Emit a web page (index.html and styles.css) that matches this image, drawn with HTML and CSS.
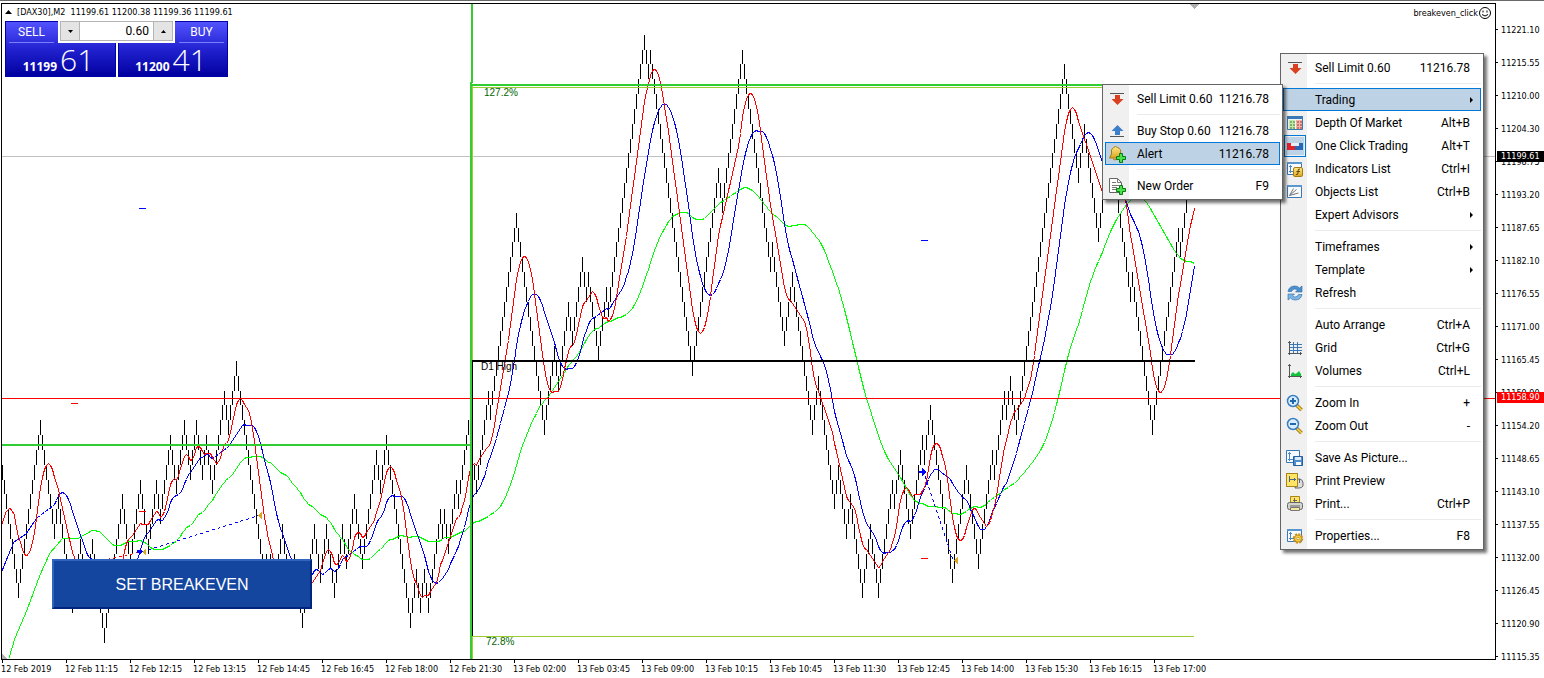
FILE: index.html
```html
<!DOCTYPE html>
<html lang="en">
<head>
<meta charset="utf-8">
<title>[DAX30],M2</title>
<link rel="stylesheet" href="styles.css">
</head>
<body>
<svg class="sprite" aria-hidden="true">
  <defs>
    <linearGradient id="gold" x1="0" y1="0" x2="0" y2="1"><stop offset="0" stop-color="#ffe98a"/><stop offset="1" stop-color="#dda41c"/></linearGradient>
    <symbol id="i-sell" viewBox="0 0 18 18"><path d="M2 3.500h14" stroke="#555"/><path d="M7 5h5v4h3.500l-6 6-6-6H7z" fill="#d9401f"/></symbol>
    <symbol id="i-buy" viewBox="0 0 18 18"><path d="M2 14.500h14" stroke="#555"/><path d="M7 13h5V9h3.500l-6-6-6 6H7z" fill="#3b7fc8"/></symbol>
    <symbol id="i-plus" viewBox="0 0 18 18"><path d="M11.500 8.500h3v3h3v3h-3v3h-3v-3h-3v-3h3z" fill="#4ce04c" stroke="#087a12"/></symbol>
    <symbol id="i-alert" viewBox="0 0 18 18"><path d="M5.500 2.500q2-2 4 0q4 1 3 6l2 4.500h-13l2-4q-1-5 2-6.500z" fill="url(#gold)" stroke="#a87b12"/><path d="M5 14q2 2 4 0" stroke="#a87b12" fill="none"/><use href="#i-plus"/></symbol>
    <symbol id="i-order" viewBox="0 0 18 18"><path d="M1.500 1.500h8l4 4v10h-12z" fill="#fff" stroke="#666"/><path d="M9.500 1.500v4h4M4 5.500h4M4 8.500h7M4 10.500h5M4 12.500h4" fill="none" stroke="#777"/><use href="#i-plus"/></symbol>
    <symbol id="i-depth" viewBox="0 0 18 18"><path d="M1.500 2.500h15v13h-15z" fill="#eef4fa" stroke="#3b79b5"/><path d="M1 2h16v3H1z" fill="#3b79b5"/><path d="M3 6h6v9H3z" fill="#c4e8a8"/><path d="M10 6h6v9h-6z" fill="#f0b4a8"/><path d="M4 8h2m1 0h2m-5 3h2m1 0h2m-5 3h2m1 0h2" stroke="#3e7d22"/><path d="M11 8h2m1 0h2m-5 3h2m1 0h2m-5 3h2m1 0h2" stroke="#a33"/></symbol>
    <symbol id="i-click" viewBox="0 0 18 18"><path d="M1 6h4v3h4v4H1z" fill="#e0242b"/><path d="M17 6h-4v3H9v4h8z" fill="#2767b4"/><path d="M5 6h8v3H5z" fill="#e8eef4"/></symbol>
    <symbol id="i-chart" viewBox="0 0 18 18"><path d="M1.500 2.500h14v12h-14z" fill="#f7fbff" stroke="#3b79b5"/><path d="M1 2h15v2H1z" fill="#5b97cf"/><path d="M4.500 5v8M3 6.500h3M3 11.500h9" stroke="#4f86bd" fill="none"/></symbol>
    <symbol id="i-indicators" viewBox="0 0 18 18"><use href="#i-chart"/><rect x="7.500" y="7.500" width="9" height="9" rx="1.500" fill="url(#gold)" stroke="#a87b12"/><path d="M14 9q-2-.5-2 2v2q0 2-2 1.500M10.500 11.500h3.500" fill="none" stroke="#5c430b"/></symbol>
    <symbol id="i-objects" viewBox="0 0 18 18"><path d="M1.500 2.500h14v12h-14z" fill="#f7fbff" stroke="#3b79b5"/><path d="M1 2h15v2H1z" fill="#5b97cf"/><path d="M3.500 12.500l4-7M3.500 12.500l7-6M3.500 12.500l9-2.500" stroke="#777" fill="none"/></symbol>
    <symbol id="i-refresh" viewBox="0 0 18 18"><path d="M2 7.500q1-5.500 7-5.500q3 0 4.500 2L16 2v6H9.500l2-2q-4-2.500-6 1.500z" fill="#4b90cf" stroke="#2b67a3" stroke-width=".6"/><path d="M16 10.500q-1 5.500-7 5.500q-3 0-4.500-2L2 16v-6h6.500l-2 2q4 2.500 6-1.500z" fill="#7db6e4" stroke="#2b67a3" stroke-width=".6"/></symbol>
    <symbol id="i-grid" viewBox="0 0 18 18"><path d="M3.500 2v14M2 3.500h3M2 14.500h14M14.500 13v3" stroke="#555" fill="none"/><path d="M7.500 3v11M11.500 3v11M4 5.500h12M4 8.500h12M4 11.500h12" stroke="#3b79b5" fill="none"/></symbol>
    <symbol id="i-volumes" viewBox="0 0 18 18"><path d="M3.500 2v14M2 3.500h3M2 14.500h14M14.500 13v3" stroke="#555" fill="none"/><path d="M5 14v-2l2-2 2 2 2-1 2-2 2 3v2z" fill="#0fc43a"/></symbol>
    <symbol id="i-lens" viewBox="0 0 18 18"><path d="M10.500 11l5 5" stroke="#8a6a10" stroke-width="3.500"/><path d="M11 11.500l4.500 4.500" stroke="#f2cc3c" stroke-width="2"/><circle cx="7" cy="7" r="5.500" fill="#d9efff" stroke="#3b7fbf" stroke-width="1.500"/><path d="M4 7h6" stroke="#2267ac" stroke-width="2"/></symbol>
    <symbol id="i-zoomin" viewBox="0 0 18 18"><use href="#i-lens"/><path d="M7 4v6" stroke="#2267ac" stroke-width="2"/></symbol>
    <symbol id="i-save" viewBox="0 0 18 18"><path d="M.5 1.500h13v12H.5z" fill="#f7fbff" stroke="#3b79b5"/><path d="M3.500 3v9M2 4.500h3M2 10.500h6" stroke="#4f86bd"/><path d="M7.500 7.500h9v9h-9z" fill="#4d8fd0" stroke="#265f9c"/><path d="M9 8h6v3H9z" fill="#dceafa"/><path d="M10 13h5v3h-5z" fill="#fff"/></symbol>
    <symbol id="i-preview" viewBox="0 0 18 18"><path d="M10 7h4q3 1 3 4v3q-1 2-4 2h-4z" fill="#ddd" stroke="#666"/><path d="M13.500 7v4" stroke="#666"/><rect x=".5" y="1.500" width="11" height="13" fill="#ffe566" stroke="#a8841a"/><path d="M3.500 4v6M3 7.500h7M8.500 6v3" stroke="#4b6a8a"/></symbol>
    <symbol id="i-print" viewBox="0 0 18 18"><path d="M4.500 8V1.500h9V8" fill="#ffe566" stroke="#a8841a"/><path d="M8.500 3v4M7 5.500h4" stroke="#666"/><rect x="1.500" y="7.500" width="15" height="7" rx="2" fill="#d4d4ce" stroke="#666"/><path d="M4 11h10" stroke="#666"/><path d="M4.500 12.500h9v3h-9z" fill="#f5e9a0" stroke="#777"/></symbol>
    <symbol id="i-props" viewBox="0 0 18 18"><use href="#i-chart"/><circle cx="12" cy="11.500" r="4" fill="none" stroke="#c8921a" stroke-width="2.500" stroke-dasharray="2 1.100"/><circle cx="12" cy="11.500" r="3.500" fill="#f6cf3f" stroke="#c8921a"/><circle cx="12" cy="11.500" r="1.200" fill="#fff" stroke="#a87b12" stroke-width=".6"/></symbol>
  </defs>
</svg>

<main class="terminal">
  <section class="plot" aria-label="Price chart">
    <svg class="canvas">
      <g transform="translate(-2 -4)">
        <path d="M2 654v5h6z" fill="#b0b0b0"/>
        <path d="M1190 4h9l-4.500 5z" fill="#b0b0b0"/>
        <rect x="2" y="156" width="100%" height="1" fill="#c0c0c0"/>
        <path id="bars" class="bars"/>
        <polyline id="slow" class="ma ma-slow"/>
        <polyline id="mid" class="ma ma-mid"/>
        <polyline id="fast" class="ma ma-fast"/>
        <rect x="2" y="398" width="100%" height="1" fill="#f00"/>
        <g fill="#32cd32">
          <rect x="2" y="444" width="469" height="2"/>
          <rect x="471" y="4" width="2" height="79"/>
          <rect x="470" y="82" width="2" height="577"/>
          <rect x="472" y="84" width="722" height="2"/>
        </g>
        <g fill="#9acd32">
          <rect x="472" y="87" width="722" height="1"/>
          <rect x="472" y="86" width="1" height="573"/>
          <rect x="472" y="636" width="722" height="1"/>
        </g>
        <rect x="472" y="360" width="723" height="2"/>
        <rect x="472" y="360" width="1" height="276"/>
        <g class="marks">
          <path d="M143 551.500L259 515.500M925 476L953 560" stroke="#00f" stroke-dasharray="3 3" fill="none"/>
          <path d="M107 559.500l36-8" stroke="#f00" stroke-dasharray="3 3" fill="none"/>
          <path d="M139 208h7v1h-7zM921 240h7v1h-7z" fill="#00f"/>
          <path d="M71 403h7v1h-7zM139 511h7v1h-7zM921 558h7v1h-7z" fill="#f00"/>
          <path d="M137 550h3v-2l3 3.500-3 3.500v-2h-3zM919 471h3v-3l4 4-4 4v-3h-3z" fill="#00f"/>
          <path d="M146 548v8l-4-4zM262 511v9l-4-4.500zM958 556v9l-4-4.500z" fill="#daa520"/>
        </g>
        <text class="level" x="484" y="96">127.2%</text>
        <text class="level level-day" x="481" y="370">D1 High</text>
        <text class="level" x="486" y="645">72.8%</text>
      </g>
    </svg>
  </section>

  <aside class="prices" aria-label="Price scale">
    <span>11221.10</span><span>11215.55</span><span>11210.00</span><span>11204.30</span><span>11198.75</span><span>11193.20</span><span>11187.65</span><span>11182.10</span><span>11176.55</span><span>11171.00</span><span>11165.45</span><span>11159.90</span><span>11154.20</span><span>11148.65</span><span>11143.10</span><span>11137.55</span><span>11132.00</span><span>11126.45</span><span>11120.90</span><span>11115.35</span>
    <b class="tag tag-bid">11199.61</b>
    <b class="tag tag-line">11158.90</b>
  </aside>

  <footer class="times">
    <span>12 Feb 2019</span><span>12 Feb 11:15</span><span>12 Feb 12:15</span><span>12 Feb 13:15</span><span>12 Feb 14:45</span><span>12 Feb 16:45</span><span>12 Feb 18:00</span><span>12 Feb 21:30</span><span>13 Feb 02:00</span><span>13 Feb 03:45</span><span>13 Feb 09:00</span><span>13 Feb 10:15</span><span>13 Feb 10:45</span><span>13 Feb 11:30</span><span>13 Feb 12:45</span><span>13 Feb 14:00</span><span>13 Feb 15:30</span><span>13 Feb 16:15</span><span>13 Feb 17:00</span>
  </footer>

  <header class="caption">
    <svg width="7" height="4" aria-hidden="true"><path d="M0 4h7L3.500 0z"/></svg>
    <span>[DAX30],M2</span><span>11199.61 11200.38 11199.36 11199.61</span>
  </header>
  <div class="expert">
    <span>breakeven_click</span>
    <svg width="12" height="12" viewBox="0 0 12 12" aria-hidden="true"><circle cx="6" cy="6" r="5.500" fill="#fff" stroke="#000"/><path d="M4 3.500v2M8 3.500v2M3 7.500q3 3 6 0" fill="none" stroke="#000"/></svg>
  </div>

  <form class="deal">
    <button type="button" class="side sell"><span class="word">SELL</span><span class="quote"><b>11199</b><i>61</i></span></button>
    <button type="button" class="side buy"><span class="word">BUY</span><span class="quote"><b>11200</b><i>41</i></span></button>
    <div class="volume">
      <button type="button" aria-label="Decrease volume"><svg width="5" height="3"><path d="M0 0h5L2.500 3z"/></svg></button>
      <input type="text" value="0.60" aria-label="Volume">
      <button type="button" aria-label="Increase volume"><svg width="5" height="3"><path d="M0 3h5L2.500 0z"/></svg></button>
    </div>
  </form>

  <button type="button" class="breakeven">SET BREAKEVEN</button>

  <ul class="menu menu-main" role="menu">
    <li><button><svg><use href="#i-sell"/></svg><span>Sell Limit 0.60</span><kbd>11216.78</kbd></button></li>
    <li class="rule"></li>
    <li><button class="hot"><svg></svg><span>Trading</span><em></em></button></li>
    <li><button><svg><use href="#i-depth"/></svg><span>Depth Of Market</span><kbd>Alt+B</kbd></button></li>
    <li><button class="checked"><svg><use href="#i-click"/></svg><span>One Click Trading</span><kbd>Alt+T</kbd></button></li>
    <li><button><svg><use href="#i-indicators"/></svg><span>Indicators List</span><kbd>Ctrl+I</kbd></button></li>
    <li><button><svg><use href="#i-objects"/></svg><span>Objects List</span><kbd>Ctrl+B</kbd></button></li>
    <li><button><svg></svg><span>Expert Advisors</span><em></em></button></li>
    <li class="rule"></li>
    <li><button><svg></svg><span>Timeframes</span><em></em></button></li>
    <li><button><svg></svg><span>Template</span><em></em></button></li>
    <li><button><svg><use href="#i-refresh"/></svg><span>Refresh</span></button></li>
    <li class="rule"></li>
    <li><button><svg></svg><span>Auto Arrange</span><kbd>Ctrl+A</kbd></button></li>
    <li><button><svg><use href="#i-grid"/></svg><span>Grid</span><kbd>Ctrl+G</kbd></button></li>
    <li><button><svg><use href="#i-volumes"/></svg><span>Volumes</span><kbd>Ctrl+L</kbd></button></li>
    <li class="rule"></li>
    <li><button><svg><use href="#i-zoomin"/></svg><span>Zoom In</span><kbd>+</kbd></button></li>
    <li><button><svg><use href="#i-lens"/></svg><span>Zoom Out</span><kbd>-</kbd></button></li>
    <li class="rule"></li>
    <li><button><svg><use href="#i-save"/></svg><span>Save As Picture...</span></button></li>
    <li><button><svg><use href="#i-preview"/></svg><span>Print Preview</span></button></li>
    <li><button><svg><use href="#i-print"/></svg><span>Print...</span><kbd>Ctrl+P</kbd></button></li>
    <li class="rule"></li>
    <li><button><svg><use href="#i-props"/></svg><span>Properties...</span><kbd>F8</kbd></button></li>
  </ul>

  <ul class="menu menu-sub" role="menu">
    <li><button><svg><use href="#i-sell"/></svg><span>Sell Limit 0.60</span><kbd>11216.78</kbd></button></li>
    <li class="rule"></li>
    <li><button><svg><use href="#i-buy"/></svg><span>Buy Stop 0.60</span><kbd>11216.78</kbd></button></li>
    <li><button class="hot"><svg><use href="#i-alert"/></svg><span>Alert</span><kbd>11216.78</kbd></button></li>
    <li class="rule"></li>
    <li><button><svg><use href="#i-order"/></svg><span>New Order</span><kbd>F9</kbd></button></li>
  </ul>
</main>
<script src="chart.js"></script>
</body>
</html>
```
FILE: styles.css
```css
* { box-sizing: border-box; }

body {
  margin: 0;
  background: #fff;
  color: #000;
  font-family: "DejaVu Sans Condensed", "Noto Sans", sans-serif;
  font-size: 9px;
}

button, input { font: inherit; color: inherit; }

.sprite { position: absolute; width: 0; height: 0; }

.terminal {
  position: relative;
  display: grid;
  grid-template-columns: minmax(0, 1fr) 48px;
  grid-template-rows: minmax(0, 1fr) 18px;
  height: 100vh;
  min-height: 678px;
  padding: 2px 0 0 1px;
  border-top: 1px solid #696969;
  overflow: hidden;
}

/* Chart */
.plot { border: 1px solid #000; overflow: hidden; }
.canvas { display: block; width: 100%; height: 100%; shape-rendering: crispEdges; }
.bars { stroke: #000; stroke-width: 1; fill: none; }
.ma { fill: none; stroke-width: 1; }
.ma-fast { stroke: #f00; }
.ma-mid { stroke: #00f; }
.ma-slow { stroke: #0f0; }
.level { font: 10px "Liberation Sans", sans-serif; fill: #006400; }
.level-day { fill: #000; }

/* Scales */
.prices {
  position: relative;
  grid-row: 1 / 3;
  grid-column: 2;
  display: flex;
  flex-direction: column;
  padding-top: 10px;
  white-space: nowrap;
}
.prices span { display: flex; align-items: center; flex: none; height: 33px; gap: 3px; }
.prices span::before { content: ""; width: 2px; height: 1px; background: #000; }
.tag {
  position: absolute;
  left: 1px;
  right: 0;
  height: 11px;
  padding-left: 4px;
  line-height: 11px;
  color: #fff;
  font-weight: 400;
}
.tag-bid { top: 148px; background: #000; }
.tag-line { top: 389px; background: #f00; }

.times { display: flex; white-space: nowrap; }
.times span { position: relative; flex: none; width: 64px; padding-top: 3px; line-height: 12px; }
.times span::before {
  content: "";
  position: absolute;
  left: 1px;
  top: 0;
  width: 1px;
  height: 3px;
  background: #000;
}

/* Overlays on the chart */
.caption {
  position: absolute;
  left: 5px;
  top: 5px;
  display: flex;
  align-items: center;
  gap: 5px;
  line-height: 12px;
  white-space: nowrap;
}
.expert {
  position: absolute;
  right: 53px;
  top: 6px;
  display: flex;
  align-items: center;
  gap: 1px;
  line-height: 12px;
}

.deal {
  position: absolute;
  left: 5px;
  top: 20px;
  display: grid;
  grid-template-columns: 111px 110px;
  gap: 2px;
  font-family: "Open Sans", "Noto Sans", sans-serif;
}
.side {
  display: flex;
  flex-direction: column;
  justify-content: space-between;
  height: 56px;
  padding: 0;
  border: 1px solid #0000a8;
  background: linear-gradient(#5252ff, #2222d0 50%, #0000a0);
  color: #fff;
}
.word {
  width: 45px;
  margin: 0 3px;
  border-bottom: 1px solid #7c7cff;
  font-family: Roboto, sans-serif;
  font-size: 12px;
  line-height: 20px;
  text-align: center;
}
.buy .word { align-self: flex-end; }
.quote {
  display: flex;
  align-items: baseline;
  align-self: center;
  gap: 3px;
  padding-right: 4px;
  line-height: 34px;
}
.quote b { font-size: 12px; }
.quote i { font-size: 30px; font-style: normal; font-weight: 300; }
.volume {
  position: absolute;
  left: 53px;
  top: 0;
  display: flex;
  width: 117px;
  height: 22px;
  padding: 0 2px 2px;
  background: #fff;
}
.volume button {
  display: grid;
  place-items: center;
  width: 20px;
  padding: 0;
  border: 1px solid #b4b4b4;
  background: #e4e4e4;
}
.volume input {
  flex: 1;
  min-width: 0;
  padding: 0 4px;
  border: solid #b4b4b4;
  border-width: 1px 0;
  font-family: Roboto, sans-serif;
  font-size: 12px;
  text-align: right;
}

.breakeven {
  position: absolute;
  left: 52px;
  top: 558px;
  width: 260px;
  height: 50px;
  padding: 2px 0 0;
  border: 2px solid;
  border-color: #3165bd #00257f #00257f #3165bd;
  background: #1446a0;
  color: #fff;
  font: 16px "Liberation Sans", sans-serif;
}

/* Menus */
.menu {
  position: absolute;
  margin: 0;
  padding: 2px;
  list-style: none;
  border: 1px solid #646464;
  background: linear-gradient(90deg, #f0f0f0 26px, #fff 26px);
  box-shadow: 3px 3px 3px rgba(0, 0, 0, .55);
  font-family: Roboto, "Noto Sans", sans-serif;
  font-size: 12px;
}
.menu-main { left: 1280px; top: 52px; width: 204px; }
.menu-sub { left: 1102px; top: 83px; width: 181px; }
.menu button {
  display: flex;
  align-items: center;
  width: 100%;
  height: 23px;
  padding: 0 10px 0 2px;
  border: 1px solid transparent;
  background: none;
  text-align: left;
  white-space: nowrap;
}
.menu svg { flex: none; width: 18px; height: 18px; margin-right: 11px; }
.menu span { flex: 1; }
.menu kbd { font: inherit; }
.menu em {
  border: solid transparent;
  border-width: 3px 0 3px 3px;
  border-left-color: #000;
  margin-right: -3px;
}
.menu .hot { border-color: #0078d7; background: #bdd2e4; }
.menu .checked svg { outline: 1px solid #0078d7; outline-offset: 1px; background: #bdd2e4; }
.rule { height: 9px; padding: 4px 0 4px 32px; }
.rule::before { content: ""; display: block; height: 1px; background: #ebebeb; }
```
FILE: chart.js
```js
// Range bars: two pixels apart, each one level above or below the last.
const BASE = 361, STEP = 14.83;
const turns = [18, 40, 54, 58, 72, 80, 86, 92, 104, 122, 130, 140, 148, 156, 160, 170, 176, 184,
  190, 196, 202, 206, 212, 224, 228, 236, 264, 266, 268, 270, 274, 282, 290, 294, 302, 314, 320,
  326, 334, 342, 346, 354, 362, 376, 380, 386, 410, 416, 420, 424, 428, 440, 442, 444, 448, 456,
  458, 468, 476, 488, 490, 516, 544, 554, 558, 568, 572, 582, 586, 588, 598, 606, 608, 644, 648,
  650, 692, 718, 722, 742, 770, 772, 784, 792, 812, 818, 834, 838, 846, 850, 862, 870, 878, 892,
  894, 900, 910, 922, 924, 930, 952, 966, 978, 992, 994, 1004, 1006, 1010, 1016, 1064, 1078,
  1084, 1098, 1110, 1130, 1132, 1152, 1178, 1180, 1190, 1192, 1194];

const y = level => Math.round(BASE + STEP * level);
const closes = [y(8)];
let x = 2, level = 7, dir = 1;
let d = `M2.5 ${y(7)}V${y(8)}`;
for (const turn of turns) {
  while (x < turn) {
    x += 2;
    level += dir;
    d += `M${x}.5 ${y(level)}V${y(level + 1)}`;
    closes.push(BASE + STEP * (dir > 0 ? level + 1 : level));
  }
  dir = -dir;
}
document.getElementById('bars').setAttribute('d', d);

// Moving averages; the lead points cover the stretch before a full window exists.
function average(id, period, lead) {
  const points = lead.slice();
  for (let i = period - 1; i < closes.length; i++) {
    let sum = 0;
    for (let k = 0; k < period; k++) sum += closes[i - k];
    points.push([2.5 + 2 * i, Math.round(sum / period) + 0.5]);
  }
  document.getElementById(id).setAttribute('points', points.map(p => p.join()).join(' '));
}
average('fast', 10, [[2, 524], [6, 512], [10, 508], [14, 514], [18, 535]]);
average('mid', 20, [[2, 571], [8, 556], [14, 542], [20, 538], [26, 534], [32, 525], [38, 517]]);
average('slow', 55, [[9, 658], [15, 638], [27, 610], [40, 575], [50, 553], [63, 538], [77, 539], [93, 530], [100, 532], [107, 539]]);
```
